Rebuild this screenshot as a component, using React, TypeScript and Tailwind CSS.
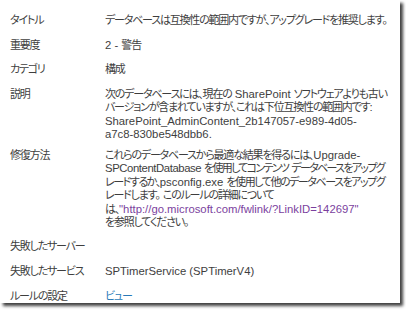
import type { ReactNode } from "react";

const latin = "font-['Liberation_Sans',sans-serif] text-[11.3px] tracking-normal";

// ASCII runs get the Latin face; the rest stays in the CJK face
function fmt(text: string): ReactNode[] {
  return text.split(/([\x20-\x7E]+)/).map((part, i) =>
    /[\x20-\x7E]/.test(part) ? (
      <span key={i} className={latin}>
        {part}
      </span>
    ) : (
      part
    )
  );
}

type Row = { label: string; gap: string; lines: ReactNode[] };

const rows: Row[] = [
  { label: "タイトル", gap: "mt-[13px]", lines: ["データベースは互換性の範囲内ですが、アップグレードを推奨します。"] },
  { label: "重要度", gap: "mt-[11px]", lines: ["2 - 警告"] },
  { label: "カテゴリ", gap: "mt-[11px]", lines: ["構成"] },
  {
    label: "説明",
    gap: "mt-[11px]",
    lines: [
      "次のデータベースには、現在の SharePoint ソフトウェアよりも古い",
      "バージョンが含まれていますが、これは下位互換性の範囲内です:",
      "SharePoint_AdminContent_2b147057-e989-4d05-",
      "a7c8-830be548dbb6.",
    ],
  },
  {
    label: "修復方法",
    gap: "mt-[7px]",
    lines: [
      "これらのデータベースから最適な結果を得るには、Upgrade-",
      <span className="tracking-[-1.7px]">
        <span className="font-['Liberation_Sans',sans-serif] text-[11.3px] tracking-[-0.4px]">SPContentDatabase </span>
        を使用してコンテンツ
        <span className={latin}> </span>
        データベースをアップグ
      </span>,
      <span className="tracking-[-1.45px]">{fmt("レードするか、psconfig.exe を使用して他のデータベースをアップグ")}</span>,
      "レードします。 このルールの詳細について",
      <>
        は、
        <span className={`${latin} text-[#7b3f9e]`}>"http://go.microsoft.com/fwlink/?LinkID=142697"</span>
      </>,
      "を参照してください。",
    ],
  },
  { label: "失敗したサーバー", gap: "mt-[10px]", lines: [""] },
  { label: "失敗したサービス", gap: "mt-[12px]", lines: ["SPTimerService (SPTimerV4)"] },
  { label: "ルールの設定", gap: "mt-[11px]", lines: [<span className="text-[#2a7ab8]">ビュー</span>] },
];

export default function App() {
  return (
    <div className="h-[312px] w-[406px] bg-white">
      <div
        className="h-[303px] w-[400px] overflow-hidden bg-white pl-[10px] font-['Noto_Sans_CJK_JP',sans-serif] text-[11px] leading-[13.5px] tracking-[-1.2px] text-[#3e3e3e] shadow-[3px_3px_3px_rgba(0,0,0,0.75)]"
        style={{ fontFeatureSettings: '"palt"' }}
      >
        {rows.map((row) => (
          <div key={row.label} className={`grid grid-cols-[95px_1fr] ${row.gap}`}>
            <div className="h-[13.5px] whitespace-nowrap">{row.label}</div>
            <div>
              {row.lines.map((line, i) => (
                <div key={i} className="h-[13.5px] whitespace-nowrap">
                  {typeof line === "string" ? fmt(line) : line}
                </div>
              ))}
            </div>
          </div>
        ))}
      </div>
    </div>
  );
}
